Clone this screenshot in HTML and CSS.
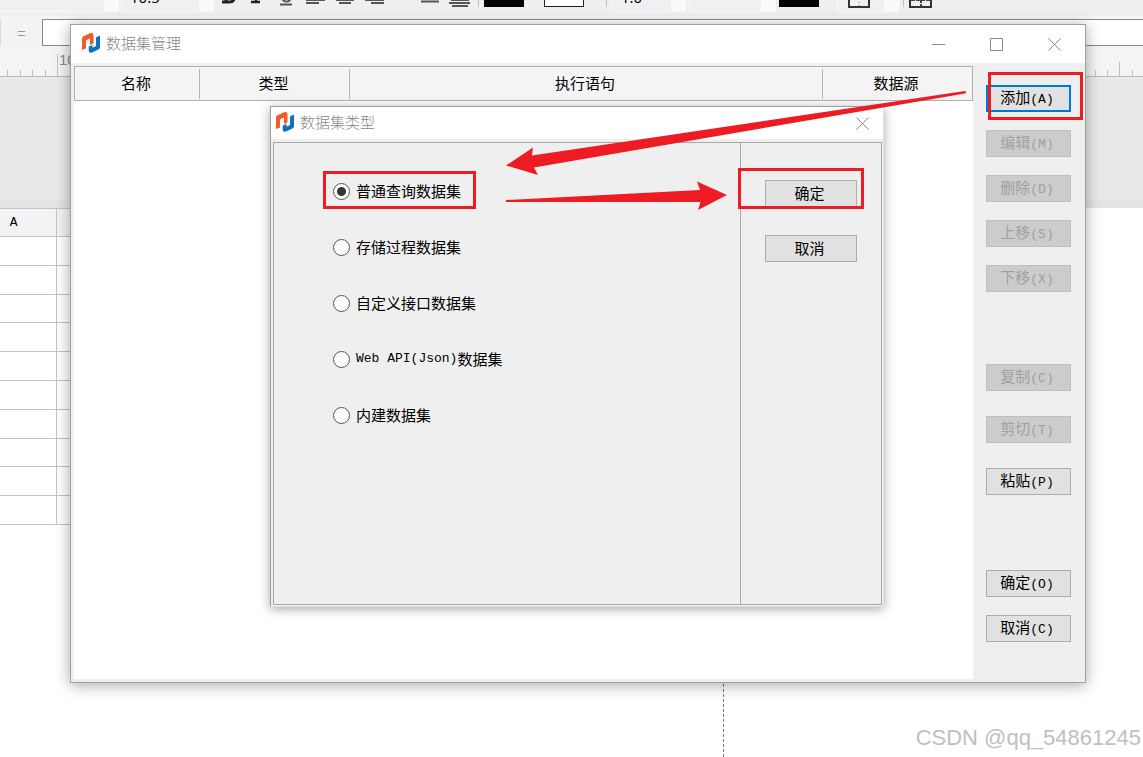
FILE: index.html
```html
<!DOCTYPE html>
<html lang="zh-CN">
<head>
<meta charset="utf-8">
<title>数据集管理</title>
<link rel="stylesheet" href="styles.css">
</head>
<body>
<svg class="defs" width="0" height="0" aria-hidden="true">
  <symbol id="logo" viewBox="0 0 18 20">
    <path fill="#f15a29" d="M0 5 1 3.500 8 .3Q11.500-.5 11.500 2V10.500L8 12V5.500L4 7.500V15.500L0 17Z"/>
    <path fill="#0b72c0" d="M18 2.500V15L16.500 16.500 10 19.600Q6.700 20.500 6.700 17.500V13.500L10.500 12V14.800L14 13V4.500Z"/>
  </symbol>
</svg>

<main class="desktop">
  <div class="toolbar">
    <div class="combo font-name"></div>
    <div class="combo font-size"><span>10.5</span></div>
    <svg class="format-icons" width="252" height="11" viewBox="0 0 252 11">
      <path d="M0 2H7Q12 2 12-2M4 2V-1" fill="none" stroke="#222" stroke-width="3"/>
      <path d="M29 2H38M34 2V-1" stroke="#222" stroke-width="2.500"/>
      <path d="M60-2Q61 1.500 64.500 1.500T69-2M58 4.500H70" fill="none" stroke="#555" stroke-width="2"/>
      <path d="M84 3H97M84 0H103M114 0H132M117 3H129M143 0H162M149 3H162M199 1.500H217M229 0H247M227 3H248M230 6H246" stroke="#555" stroke-width="2"/>
    </svg>
    <i class="separator"></i>
    <i class="swatch black"></i>
    <i class="swatch white"></i>
    <i class="separator wide"></i>
    <div class="combo line-width"><span>1.0</span></div>
    <div class="combo line-style"></div>
    <i class="swatch black"></i>
    <div class="combo border-kind">
      <svg width="22" height="11" viewBox="0 0 22 11"><path d="M1-1V7H21V-1" fill="none" stroke="#333" stroke-width="2"/><path d="M11-1V6" stroke="#777" stroke-dasharray="1 2"/></svg>
    </div>
    <i class="separator"></i>
    <svg width="23" height="11" viewBox="0 0 23 11"><path d="M1-1V7H22V-1" fill="none" stroke="#333" stroke-width="2"/><path d="M12-1V6M2 0H21" stroke="#444" stroke-dasharray="4 1" stroke-width="2"/></svg>
  </div>

  <div class="formula-bar">
    <span class="equals">=</span>
    <input class="formula" type="text" aria-label="公式">
  </div>

  <div class="ruler">
    <svg width="100%" height="32">
      <defs>
        <pattern id="ticks" width="125" height="32" patternUnits="userSpaceOnUse">
          <path d="M7.500 24V32M20.500 24V32M32.500 24V32M45.500 24V32M57.500 8V32M70.500 24V32M82.500 24V32M95.500 24V32M107.500 24V32M119.500 16V32" stroke="#c0c0c0" fill="none"/>
        </pattern>
      </defs>
      <rect width="100%" height="32" fill="url(#ticks)"/>
      <text class="ruler-number" x="59" y="19">100</text>
    </svg>
  </div>

  <div class="workspace"></div>
  <div class="sheet">
    <table class="cells">
      <thead><tr><th>A</th><th></th></tr></thead>
      <tbody>
        <tr><td></td><td></td></tr><tr><td></td><td></td></tr>
        <tr><td></td><td></td></tr><tr><td></td><td></td></tr>
        <tr><td></td><td></td></tr><tr><td></td><td></td></tr>
        <tr><td></td><td></td></tr><tr><td></td><td></td></tr>
        <tr><td></td><td></td></tr><tr><td></td><td></td></tr>
      </tbody>
    </table>
  </div>

  <section class="window manager">
    <header class="titlebar">
      <svg class="logo" width="18" height="20"><use href="#logo"/></svg>
      <h1>数据集管理</h1>
      <div class="window-controls">
        <button type="button" aria-label="最小化"><svg width="13" height="13"><path d="M0 6.500H13"/></svg></button>
        <button type="button" aria-label="最大化"><svg width="13" height="13"><path d="M.5.5H12.500V12.500H.5Z"/></svg></button>
        <button type="button" aria-label="关闭"><svg width="13" height="13"><path d="M.5.5 12.500 12.500M12.500.5.5 12.500"/></svg></button>
      </div>
    </header>
    <div class="manager-body">
      <div class="dataset-list">
        <table class="list-head">
          <colgroup><col class="c-name"><col class="c-type"><col><col class="c-source"></colgroup>
          <tr><th>名称</th><th>类型</th><th>执行语句</th><th>数据源</th></tr>
        </table>
      </div>
      <aside class="actions">
        <div class="group">
          <button type="button" class="btn focused">添加<span>(A)</span></button>
          <button type="button" class="btn" disabled>编辑<span>(M)</span></button>
          <button type="button" class="btn" disabled>删除<span>(D)</span></button>
          <button type="button" class="btn" disabled>上移<span>(S)</span></button>
          <button type="button" class="btn" disabled>下移<span>(X)</span></button>
        </div>
        <div class="group clipboard">
          <button type="button" class="btn" disabled>复制<span>(C)</span></button>
          <button type="button" class="btn" disabled>剪切<span>(T)</span></button>
          <button type="button" class="btn">粘贴<span>(P)</span></button>
        </div>
        <div class="group">
          <button type="button" class="btn">确定<span>(O)</span></button>
          <button type="button" class="btn">取消<span>(C)</span></button>
        </div>
      </aside>
    </div>
  </section>

  <section class="window dialog">
    <header class="titlebar">
      <svg class="logo" width="18" height="20"><use href="#logo"/></svg>
      <h2>数据集类型</h2>
      <div class="window-controls">
        <button type="button" aria-label="关闭"><svg width="13" height="13"><path d="M.5.5 12.500 12.500M12.500.5.5 12.500"/></svg></button>
      </div>
    </header>
    <div class="dialog-body">
      <form class="types">
        <label><input type="radio" name="type" checked>普通查询数据集</label>
        <label><input type="radio" name="type">存储过程数据集</label>
        <label><input type="radio" name="type">自定义接口数据集</label>
        <label><input type="radio" name="type"><span>Web API(Json)</span>数据集</label>
        <label><input type="radio" name="type">内建数据集</label>
      </form>
      <div class="dialog-actions">
        <button type="button" class="btn">确定</button>
        <button type="button" class="btn">取消</button>
      </div>
    </div>
  </section>

  <svg class="marks" width="1143" height="757" viewBox="0 0 1143 757" aria-hidden="true">
    <g fill="none" stroke="#ed1c24" stroke-width="3">
      <rect x="989.500" y="73.500" width="92" height="45"/>
      <rect x="324.500" y="172.500" width="150" height="35"/>
      <rect x="739.500" y="169.500" width="123" height="38"/>
    </g>
    <g fill="#ed1c24">
      <path d="M506 165.500 533 147.500 532 155.500 965 91Q967 92 965 93.500L534 167.500 538 175Z"/>
      <path d="M506 200 700 190 697 181.500 727 195 698 210 700.500 202H506Z"/>
    </g>
  </svg>
  <div class="watermark">CSDN @qq_54861245</div>
</main>
</body>
</html>
```
FILE: styles.css
```css
* { box-sizing: border-box; }
body {
  margin: 0;
  font: 15px/20px "Noto Sans CJK SC", sans-serif;
  color: #000;
}
button, input { font: inherit; color: inherit; }
.defs { position: absolute; }
.desktop {
  position: relative;
  display: flex;
  flex-direction: column;
  height: 100vh;
  min-height: 700px;
  overflow: hidden;
  background: #fff;
}

/* Editor behind the windows */
.toolbar {
  display: flex;
  align-items: flex-start;
  flex: none;
  height: 19px;
  background: #efefef;
  border-bottom: 3px solid #f5f5f5;
}
.toolbar > * { flex: none; }
.combo {
  height: 12px;
  overflow: hidden;
  background: #f0f0f0;
  border: solid #fafafa;
  border-width: 0 15px 1px 1px;
}
.combo span {
  display: block;
  margin-top: -13px;
  padding-left: 8px;
  font: 15px/20px "Noto Sans", sans-serif;
}
.font-name { width: 119px; border-left: 0; }
.font-size { width: 93px; margin-left: 2px; }
.format-icons { margin-left: 8px; }
.separator { width: 1px; height: 7px; margin: 0 5px 0 4px; background: #c0c0c0; }
.separator.wide { margin-left: 22px; }
.swatch { width: 40px; height: 7px; }
.swatch.black { background: #000; }
.swatch.white { margin-left: 20px; border: 1px solid #222; border-top: 0; background: #fff; }
.line-width { width: 74px; }
.line-style { width: 87px; margin: 0 3px; }
.border-kind { width: 62px; margin-left: 18px; padding-left: 10px; }
.border-kind svg { display: block; }

.formula-bar {
  display: flex;
  flex: none;
  height: 27px;
  background: #f3f3f3;
}
.equals {
  width: 42px;
  padding-top: 4px;
  text-align: center;
  color: #999;
  border-left: 1px solid #ddd;
}
.formula {
  flex: 1;
  min-width: 0;
  border: 1px solid #888;
  border-right: 0;
  background: #fff;
}
.ruler {
  flex: none;
  height: 31px;
  background: #f4f4f4;
  border-bottom: 1px solid #bbb;
}
.ruler svg { display: block; height: 30px; }
.ruler-number { font: 15px "Liberation Sans", sans-serif; fill: #888; }
.workspace {
  flex: none;
  height: 131px;
  background: #e9e9e9;
  border-bottom: 8px solid #e4e4e4;
}
.sheet {
  flex: 1;
  width: 724px;
  border-right: 1px dashed #777;
}
.cells {
  width: 724px;
  height: 317px;
  table-layout: fixed;
  border-collapse: collapse;
}
.cells th, .cells td { padding: 0; border: 1px solid #c4c4c4; }
.cells th { height: 28px; background: #f3f3f3; font: 13px/18px "Liberation Mono", monospace; }
.cells th:first-child { width: 56px; padding-right: 28px; border-left: 0; }
.cells td:first-child { border-left: 0; }

/* Windows */
.window {
  position: absolute;
  display: flex;
  flex-direction: column;
  background: #efefef;
  border: 1px solid #a0a0a0;
}
.manager {
  top: 24px;
  right: 57px;
  bottom: 74px;
  left: 70px;
  box-shadow: 0 2px 14px rgba(0, 0, 0, .35);
}
.dialog {
  top: 106px;
  left: 270px;
  width: 614px;
  height: 501px;
  border-color: #a0a0a0 #e0e0e0 #e0e0e0 #a0a0a0;
  box-shadow: 0 2px 10px rgba(0, 0, 0, .35);
}
.titlebar {
  display: flex;
  align-items: center;
  flex: none;
  height: 38px;
  padding: 0 0 2px 11px;
  background: #fff;
}
.dialog .titlebar { height: 32px; padding-left: 5px; }
.titlebar h1, .titlebar h2 {
  flex: 1;
  margin: 0 0 0 6px;
  font-size: 15px;
  font-weight: 300;
  color: #888;
}
.window-controls { display: flex; gap: 28px; padding-right: 16px; }
.dialog .window-controls { padding-right: 6px; }
.window-controls button {
  display: grid;
  place-items: center;
  width: 30px;
  height: 30px;
  padding: 2px 0 0;
  border: 0;
  background: none;
}
.window-controls svg { fill: none; stroke: #888; }

.manager-body { display: flex; flex: 1; padding: 3px 0 3px 3px; }
.dataset-list { flex: 1; background: #fff; }
.list-head {
  width: 100%;
  height: 35px;
  table-layout: fixed;
  border-collapse: separate;
  border-spacing: 0;
  background: #f4f4f4;
  border: 1px solid #b0b0b0;
}
.list-head th {
  padding: 0 3px 2px 0;
  font-weight: 400;
  background: linear-gradient(#b4b4b4, #b4b4b4) right center / 1px 30px no-repeat;
}
.list-head th:last-child { background: none; }
.c-name { width: 125px; }
.c-type { width: 150px; }
.c-source { width: 149px; }

.actions {
  display: flex;
  flex-direction: column;
  flex: none;
  width: 112px;
  padding: 19px 14px 0 13px;
}
.group { display: flex; flex-direction: column; gap: 18px; }
.clipboard { gap: 25px; margin: 72px 0 75px; }
.btn {
  height: 27px;
  padding: 0 3px 1px 0;
  line-height: 20px;
  white-space: nowrap;
  background: #e1e1e1;
  border: 1px solid #adadad;
}
.btn span, .types span { font: 13px/20px "Liberation Mono", monospace; }
.btn.focused { border: 2px solid #0078d7; }
.btn:disabled { background: #ccc; border-color: #bfbfbf; color: #a0a0a0; }

.dialog-body {
  display: flex;
  flex: 1;
  margin: 3px 1px 1px 2px;
  border: 1px solid #a8a8a8;
}
.types {
  display: flex;
  flex-direction: column;
  flex: 1;
  gap: 36px;
  padding: 38px 0 0 59px;
  border-right: 1px solid #a8a8a8;
}
.types label { display: flex; align-items: center; height: 20px; }
.types input {
  appearance: none;
  flex: none;
  width: 17px;
  height: 17px;
  margin: 0 6px 0 0;
  border: 1px solid #555;
  border-radius: 50%;
  background: #fff;
}
.types input:checked { background: radial-gradient(circle, #333 4px, #fff 5px); }
.dialog-actions {
  display: flex;
  flex-direction: column;
  flex: none;
  gap: 28px;
  width: 140px;
  padding: 37px 24px 0;
}

/* Annotations over the screen */
.marks { position: absolute; top: 0; left: 0; pointer-events: none; }
.watermark {
  position: absolute;
  right: 2px;
  bottom: 5px;
  font: 22px/28px "Liberation Sans", sans-serif;
  color: #c0c0c0;
  text-shadow: 1px 1px 0 #fff;
}
```
